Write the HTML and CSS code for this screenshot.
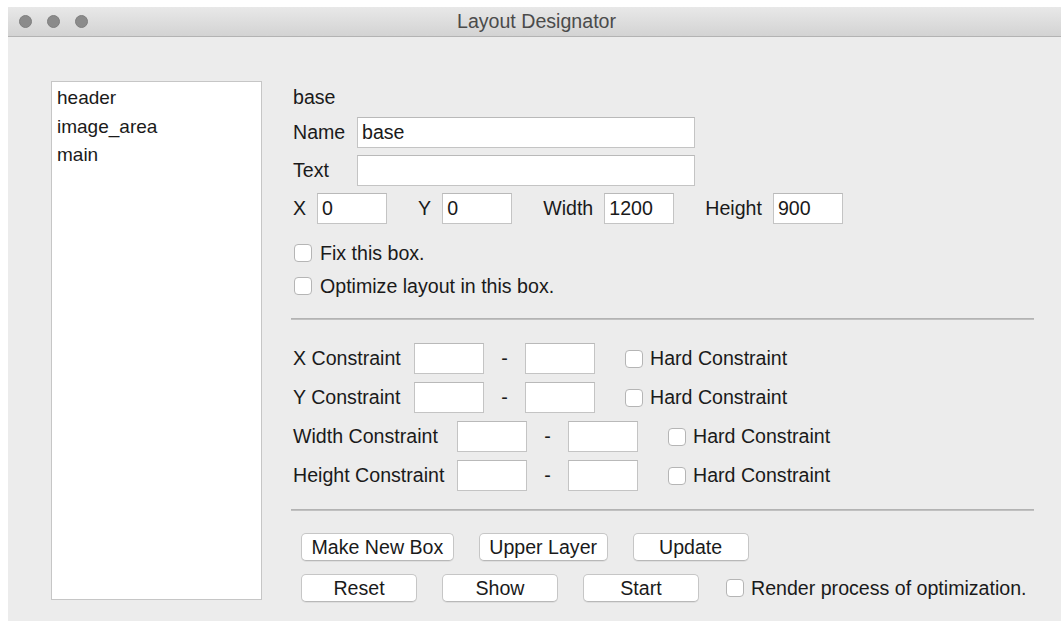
FILE: index.html
```html
<!DOCTYPE html>
<html lang="en">
<head>
<meta charset="utf-8">
<title>Layout Designator</title>
<link rel="stylesheet" href="styles.css">
</head>
<body>
<div class="window">
  <div class="titlebar">
    <div class="lights">
      <span class="light"></span>
      <span class="light"></span>
      <span class="light"></span>
    </div>
    <div class="title">Layout Designator</div>
  </div>

  <div class="content">
    <ul class="box-list">
      <li>header</li>
      <li>image_area</li>
      <li>main</li>
    </ul>

    <div class="panel">
      <div class="current">base</div>

      <div class="fields">
        <div class="field-row">
          <label class="field-label">Name</label>
          <input class="entry entry-wide" type="text" value="base">
        </div>
        <div class="field-row">
          <label class="field-label">Text</label>
          <input class="entry entry-wide" type="text" value="">
        </div>
        <div class="geom-row">
          <div class="pair"><label>X</label><input class="entry entry-small" type="text" value="0"></div>
          <div class="pair"><label>Y</label><input class="entry entry-small" type="text" value="0"></div>
          <div class="pair"><label>Width</label><input class="entry entry-small" type="text" value="1200"></div>
          <div class="pair"><label>Height</label><input class="entry entry-small" type="text" value="900"></div>
        </div>
      </div>

      <div class="checks">
        <label class="check"><input type="checkbox" class="tick"><span>Fix this box.</span></label>
        <label class="check"><input type="checkbox" class="tick"><span>Optimize layout in this box.</span></label>
      </div>

      <div class="separator sep-top"></div>

      <div class="constraints">
        <div class="con-row con-short">
          <label class="con-label">X Constraint</label>
          <input class="entry entry-small" type="text">
          <span class="dash">-</span>
          <input class="entry entry-small" type="text">
          <label class="check con-check"><input type="checkbox" class="tick"><span>Hard Constraint</span></label>
        </div>
        <div class="con-row con-short">
          <label class="con-label">Y Constraint</label>
          <input class="entry entry-small" type="text">
          <span class="dash">-</span>
          <input class="entry entry-small" type="text">
          <label class="check con-check"><input type="checkbox" class="tick"><span>Hard Constraint</span></label>
        </div>
        <div class="con-row con-long">
          <label class="con-label">Width Constraint</label>
          <input class="entry entry-small" type="text">
          <span class="dash">-</span>
          <input class="entry entry-small" type="text">
          <label class="check con-check"><input type="checkbox" class="tick"><span>Hard Constraint</span></label>
        </div>
        <div class="con-row con-long">
          <label class="con-label">Height Constraint</label>
          <input class="entry entry-small" type="text">
          <span class="dash">-</span>
          <input class="entry entry-small" type="text">
          <label class="check con-check"><input type="checkbox" class="tick"><span>Hard Constraint</span></label>
        </div>
      </div>

      <div class="separator sep-bottom"></div>

      <div class="actions">
        <div class="action-row">
          <button class="btn">Make New Box</button>
          <button class="btn">Upper Layer</button>
          <button class="btn">Update</button>
        </div>
        <div class="action-row">
          <button class="btn">Reset</button>
          <button class="btn">Show</button>
          <button class="btn">Start</button>
          <label class="check render-check"><input type="checkbox" class="tick"><span>Render process of optimization.</span></label>
        </div>
      </div>
    </div>
  </div>
</div>
</body>
</html>
```

FILE: styles.css
```css
html, body {
  background: #ffffff;
}

body {
  margin: 7px 0 0 8px;
  font-family: "Liberation Sans", Arial, Helvetica, sans-serif;
  font-size: 19.6px;
  color: #1a1a1a;
}

.window {
  width: 1053px;
  height: 614px;
  background: #ececec;
  display: flex;
  flex-direction: column;
  overflow: hidden;
}

/* ---- title bar ---- */
.titlebar {
  position: relative;
  height: 29px;
  flex: none;
  background: linear-gradient(#e8e8e8, #d3d3d3);
  border-bottom: 1px solid #b3b3b3;
  display: flex;
  align-items: center;
  justify-content: center;
}

.lights {
  position: absolute;
  left: 11px;
  top: 8px;
  display: flex;
  gap: 15px;
}

.light {
  box-sizing: border-box;
  width: 13px;
  height: 13px;
  border-radius: 50%;
  background: #8b8b8b;
  border: 1px solid #7f7f7f;
}

.title {
  color: #4b4b4b;
  line-height: 29px;
  padding-left: 4px;
}

/* ---- main area ---- */
.content {
  flex: 1;
  display: flex;
  padding: 44px 27px 0 43px;
  gap: 29px;
}

.box-list {
  box-sizing: border-box;
  list-style: none;
  margin: 0;
  width: 211px;
  height: 519px;
  flex: none;
  background: #ffffff;
  border: 1px solid #c6c6c6;
  padding: 2px 5px;
  font-size: 19px;
}

.box-list li {
  line-height: 28.5px;
}

.panel {
  flex: 1;
  padding-top: 1px;
  display: flex;
  flex-direction: column;
}

.current {
  line-height: 24px;
  padding: 3px 0 0 2px;
}

/* text entries */
.entry {
  box-sizing: border-box;
  height: 31px;
  margin: 0;
  padding: 0 4px;
  background: #ffffff;
  border: 1px solid #c4c4c4;
  border-top-color: #b9b9b9;
  border-radius: 0;
  font: inherit;
  color: #1a1a1a;
  outline: none;
}

.entry-wide {
  width: 338px;
}

.entry-small {
  width: 70px;
}

.fields {
  margin-top: 8px;
  display: flex;
  flex-direction: column;
  gap: 7px;
}

.field-row {
  display: flex;
  align-items: center;
  padding-left: 2px;
}

.field-label {
  width: 64px;
}

.geom-row {
  display: flex;
  align-items: center;
  gap: 31px;
  padding-left: 2px;
}

.pair {
  display: flex;
  align-items: center;
  gap: 11px;
}

/* checkboxes */
.checks {
  margin-top: 16px;
  display: flex;
  flex-direction: column;
  gap: 7px;
  padding-left: 3px;
}

.check {
  display: flex;
  align-items: center;
  gap: 8px;
  height: 26px;
}

.tick {
  appearance: none;
  -webkit-appearance: none;
  box-sizing: border-box;
  width: 18px;
  height: 18px;
  margin: 0;
  background: #ffffff;
  border: 1px solid #b5b5b5;
  border-radius: 4px;
  flex: none;
}

.separator {
  height: 2px;
  background: #c0c0c0;
  border-top: 1px solid #b3b3b3;
  box-sizing: border-box;
}

.sep-top {
  margin-top: 19px;
}

/* constraints */
.constraints {
  margin-top: 23px;
  display: flex;
  flex-direction: column;
  gap: 8px;
}

.con-row {
  display: flex;
  align-items: center;
  padding-left: 2px;
}

.con-short .con-label {
  width: 121px;
}

.con-long .con-label {
  width: 164px;
}

.dash {
  width: 41px;
  text-align: center;
}

.con-check {
  margin-left: 30px;
  gap: 7px;
}

.sep-bottom {
  margin-top: 18px;
}

/* buttons */
.actions {
  margin-top: 22px;
  display: flex;
  flex-direction: column;
  gap: 13px;
  padding-left: 10px;
}

.action-row {
  display: flex;
  align-items: center;
  gap: 25px;
}

.btn {
  box-sizing: border-box;
  height: 28px;
  min-width: 116px;
  padding: 0 9.5px;
  margin: 0;
  background: #ffffff;
  border: 1px solid #c6c6c6;
  border-bottom-color: #b8b8b8;
  border-radius: 5px;
  box-shadow: 0 1px 0 rgba(0, 0, 0, 0.06);
  font: inherit;
  color: #1a1a1a;
  line-height: 26px;
}

.render-check {
  margin-left: 2px;
  gap: 7px;
}
```
